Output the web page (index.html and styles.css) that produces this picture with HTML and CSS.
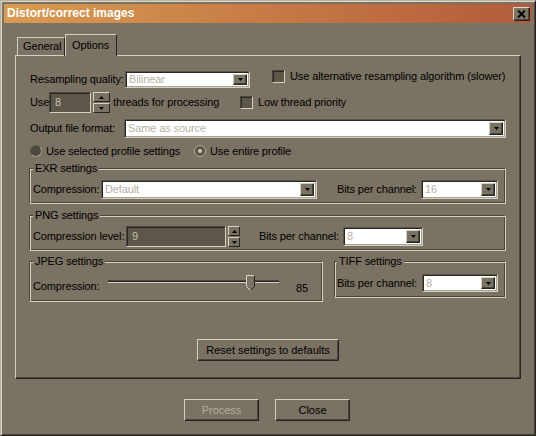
FILE: index.html
```html
<!DOCTYPE html>
<html>
<head>
<meta charset="utf-8">
<title>Distort/correct images</title>
<link rel="stylesheet" href="styles.css">
</head>
<body>
<div class="window">
  <div class="titlebar">
    <span class="title">Distort/correct images</span>
    <span class="close"><svg width="9" height="8" viewBox="0 0 9 8"><path d="M1 0.5 L8 7.5 M8 0.5 L1 7.5" stroke="#000" stroke-width="1.9" fill="none"/></svg></span>
  </div>
  <div class="tabs">
    <div class="tab general">General</div>
    <div class="tab active">Options</div>
  </div>
  <div class="pane">
    <div class="row r1">
      <span class="lbl w-rq">Resampling quality:</span>
      <div class="combo c-rq"><span class="val">Bilinear</span><span class="drop"><svg width="5" height="3" viewBox="0 0 5 3"><polygon points="0,0 5,0 2.5,3" fill="#000"/></svg></span></div>
      <span class="check c-alt"><span class="box"></span><span>Use alternative resampling algorithm (slower)</span></span>
    </div>
    <div class="row r2">
      <span class="lbl w-use">Use</span>
      <div class="spin s-threads">
        <span class="field">8</span>
        <span class="arrows">
          <span class="arr"><svg width="5" height="3" viewBox="0 0 5 3"><polygon points="0,3 5,3 2.5,0" fill="#000"/></svg></span>
          <span class="arr"><svg width="5" height="3" viewBox="0 0 5 3"><polygon points="0,0 5,0 2.5,3" fill="#000"/></svg></span>
        </span>
      </div>
      <span class="lbl w-thr">threads for processing</span>
      <span class="check"><span class="box"></span><span>Low thread priority</span></span>
    </div>
    <div class="row r3">
      <span class="lbl w-off">Output file format:</span>
      <div class="combo c-off"><span class="val">Same as source</span><span class="drop"><svg width="5" height="3" viewBox="0 0 5 3"><polygon points="0,0 5,0 2.5,3" fill="#000"/></svg></span></div>
    </div>
    <div class="row r4">
      <span class="radio r-sel"><span class="dot"></span>Use selected profile settings</span>
      <span class="radio checked"><span class="dot"></span>Use entire profile</span>
    </div>
    <fieldset class="group g-exr">
      <legend>EXR settings</legend>
      <div class="row grow-exr">
        <span class="lbl w-comp">Compression:</span>
        <div class="combo c-exr"><span class="val">Default</span><span class="drop"><svg width="5" height="3" viewBox="0 0 5 3"><polygon points="0,0 5,0 2.5,3" fill="#000"/></svg></span></div>
        <span class="lbl w-bits b-exr">Bits per channel:</span>
        <div class="combo c-bits"><span class="val">16</span><span class="drop"><svg width="5" height="3" viewBox="0 0 5 3"><polygon points="0,0 5,0 2.5,3" fill="#000"/></svg></span></div>
      </div>
    </fieldset>
    <fieldset class="group g-png">
      <legend>PNG settings</legend>
      <div class="row grow-png">
        <span class="lbl w-cl">Compression level:</span>
        <div class="spin s-png">
          <span class="field">9</span>
          <span class="arrows">
            <span class="arr"><svg width="5" height="3" viewBox="0 0 5 3"><polygon points="0,3 5,3 2.5,0" fill="#000"/></svg></span>
            <span class="arr"><svg width="5" height="3" viewBox="0 0 5 3"><polygon points="0,0 5,0 2.5,3" fill="#000"/></svg></span>
          </span>
        </div>
        <span class="lbl w-bits b-png">Bits per channel:</span>
        <div class="combo c-bits-png"><span class="val">8</span><span class="drop"><svg width="5" height="3" viewBox="0 0 5 3"><polygon points="0,0 5,0 2.5,3" fill="#000"/></svg></span></div>
      </div>
    </fieldset>
    <div class="pair">
      <fieldset class="group g-jpeg">
        <legend>JPEG settings</legend>
        <div class="row grow-jpeg">
          <span class="lbl w-jc">Compression:</span>
          <div class="slider">
            <span class="track"></span>
            <span class="thumb" style="left: 138px"><svg width="9" height="16" viewBox="0 0 9 16"><polygon points="0.5,0.5 8.5,0.5 8.5,11.5 4.5,15.5 0.5,11.5" fill="#7a7262"/><polyline points="0.5,11.5 0.5,0.5 8.5,0.5" fill="none" stroke="#dcd6c8"/><polyline points="8.5,0.5 8.5,11.5 4.5,15.5" fill="none" stroke="#26241f"/><polyline points="0.5,11.5 4.5,15.5" fill="none" stroke="#dcd6c8"/></svg></span>
          </div>
          <span class="num">85</span>
        </div>
      </fieldset>
      <fieldset class="group g-tiff">
        <legend>TIFF settings</legend>
        <div class="row grow-tiff">
          <span class="lbl w-bits">Bits per channel:</span>
          <div class="combo c-bits"><span class="val">8</span><span class="drop"><svg width="5" height="3" viewBox="0 0 5 3"><polygon points="0,0 5,0 2.5,3" fill="#000"/></svg></span></div>
        </div>
      </fieldset>
    </div>
    <div class="reset-row">
      <button class="btn reset">Reset settings to defaults</button>
    </div>
  </div>
  <div class="actions">
    <button class="btn disabled">Process</button>
    <button class="btn">Close</button>
  </div>
</div>
</body>
</html>
```

FILE: styles.css
```css
* { box-sizing: border-box; }
html, body { margin: 0; padding: 0; }
body {
  background: #7a7262;
  font-family: "Liberation Sans", Arial, sans-serif;
  font-size: 11px;
  line-height: 13px;
  letter-spacing: -0.12px;
  color: #000;
}
.window {
  width: 536px;
  height: 436px;
  border: 1px solid;
  border-color: #b8b2a3 #262420 #262420 #b8b2a3;
  box-shadow: inset 1px 1px #ddd7c8, inset -1px -1px #4a463d;
  padding: 3px;
  display: flex;
  flex-direction: column;
  background: #7a7262;
}
.titlebar {
  height: 19px;
  flex: none;
  display: flex;
  align-items: center;
  justify-content: space-between;
  padding: 0 2px 0 3px;
  background: linear-gradient(to right, #da9a50, #b25b3b);
}
.title {
  color: #fff;
  font-weight: bold;
  font-size: 12px;
  letter-spacing: 0;
}
.close {
  width: 17px;
  height: 14px;
  background: #7d7565;
  border: 1px solid;
  border-color: #dcd6c8 #26241f #26241f #dcd6c8;
  box-shadow: inset -1px -1px #4a463d;
  display: flex;
  align-items: center;
  justify-content: center;
}
.close svg { display: block; }

/* tabs */
.tabs {
  flex: none;
  display: flex;
  align-items: flex-end;
  height: 22px;
  margin: 11px 0 -1px 13px;
  position: relative;
  z-index: 1;
}
.tab {
  border: 1px solid;
  border-bottom: none;
  border-color: #d6d0c1 #26241f transparent #d6d0c1;
  display: flex;
  align-items: center;
}
.tab.general {
  width: 48px;
  height: 19px;
  padding: 0 0 1px 5px;
}
.tab.active {
  width: 52px;
  height: 22px;
  padding: 0 0 1px 6px;
  background: #7a7262;
}

/* pane */
.pane {
  flex: none;
  margin: 0 11px;
  height: 324px;
  border: 1px solid;
  border-color: #d6d0c1 #26241f #26241f #d6d0c1;
  box-shadow: inset -1px -1px #4a463d;
  padding: 14px 14px 0 14px;
  display: flex;
  flex-direction: column;
}
.row {
  display: flex;
  align-items: center;
  flex: none;
  white-space: nowrap;
}
.lbl { flex: none; white-space: nowrap; }
.r1 { height: 18px; }
.r2 { height: 21px; margin-top: 4px; }
.r3 { height: 19px; margin-top: 6px; }
.r4 { height: 14px; margin-top: 6px; }

.w-rq { width: 95px; }
.w-use { width: 19px; }
.w-thr { margin-left: 3px; width: 127px; }
.w-off { width: 94px; }
.w-comp { width: 68px; }
.w-bits { width: 84px; }
.w-cl { width: 93px; }
.w-jc { width: 75px; }

/* combo */
.combo {
  display: flex;
  align-items: stretch;
  background: #fff;
  border: 1px solid;
  border-color: #5a554a #d6d0c1 #d6d0c1 #5a554a;
  box-shadow: inset 1px 1px #2a2722, inset -1px -1px #a8a293;
  padding: 2px;
  flex: none;
}
.combo .val {
  flex: 1;
  color: #b9b0a3;
  padding-left: 1px;
  display: flex;
  align-items: center;
  overflow: hidden;
}
.combo .drop {
  width: 14px;
  flex: none;
  background: #7a7262;
  border: 1px solid;
  border-color: #d6d0c1 #26241f #26241f #d6d0c1;
  box-shadow: inset -1px -1px #4a463d;
  display: flex;
  align-items: center;
  justify-content: center;
}
.combo .drop svg, .arr svg { display: block; }
.c-rq { width: 125px; height: 17px; }
.c-off { flex: 1; height: 19px; }
.c-exr { width: 216px; height: 19px; }
.c-bits { width: 77px; height: 19px; }
.c-bits-png { width: 80px; height: 19px; }
.b-exr { margin-left: 20px; }
.b-png { margin-left: 19px; }

/* checkbox */
.check {
  display: flex;
  align-items: center;
  flex: none;
}
.check .box {
  width: 13px;
  height: 13px;
  background: #5d5749;
  border: 1px solid;
  border-color: #4a463d #d6d0c1 #d6d0c1 #4a463d;
  box-shadow: inset 1px 1px #2a2722;
  margin-right: 5px;
}
.c-alt { margin-left: 22px; }
.r1 .c-alt { align-self: flex-start; }

/* spin */
.spin { display: flex; flex: none; height: 21px; }
.spin .field {
  background: #5d5749;
  color: #c8c0af;
  border: 1px solid;
  border-color: #4a463d #d6d0c1 #d6d0c1 #4a463d;
  box-shadow: inset 1px 1px #2a2722;
  display: flex;
  align-items: center;
  padding-left: 5px;
}
.s-threads .field { width: 42px; }
.s-png .field { width: 100px; }
.arrows {
  display: flex;
  flex-direction: column;
  justify-content: space-between;
  margin-left: 2px;
}
.arr {
  height: 10px;
  border: 1px solid;
  border-color: #d6d0c1 #26241f #26241f #d6d0c1;
  background: #7a7262;
  display: flex;
  align-items: center;
  justify-content: center;
}
.s-threads .arr { width: 17px; }
.s-png .arr { width: 12px; }

/* radio */
.radio {
  display: flex;
  align-items: center;
  flex: none;
}
.radio .dot {
  width: 12px;
  height: 12px;
  border-radius: 50%;
  background: #4d4940;
  border: 1px solid;
  border-color: #5f5a4f #a29d90 #a29d90 #5f5a4f;
  margin-right: 4px;
  display: flex;
  align-items: center;
  justify-content: center;
}
.radio.checked .dot {
  background: #5d5749;
  border-color: #b0aa9d;
}
.radio.checked .dot::after {
  content: "";
  width: 4px;
  height: 4px;
  border-radius: 50%;
  background: #cfc9bc;
}
.r-sel { width: 164px; }

/* groups */
.group {
  margin: 0 0 0 -1px;
  border: 1px solid;
  border-color: #4a463d #d6d0c1 #d6d0c1 #4a463d;
  box-shadow: inset 1px 1px #d6d0c1, inset -1px -1px #4a463d;
  min-width: 0;
}
.group legend {
  padding: 0 2px;
  line-height: 13px;
  background: #7a7262;
}
.g-exr {
  margin-top: 4px;
  padding: 5px 5px 4px 3px;
}
.g-png {
  margin-top: 5px;
  padding: 4px 5px 3px 3px;
}
.grow-exr { height: 19px; }
.grow-png { height: 21px; }
.pair {
  display: flex;
  gap: 11px;
  margin-top: 4px;
  margin-left: -1px;
  align-items: flex-start;
}
.pair .group { margin: 0; }
.g-jpeg {
  width: 294px;
  padding: 8px 5px 5px 3px;
}
.g-tiff {
  width: 172px;
  padding: 6px 5px 5px 2px;
}
.grow-jpeg { height: 20px; }
.grow-tiff { height: 18px; }
.grow-tiff .w-bits { width: 85px; }
.grow-tiff .combo { width: 76px; height: 18px; }
.slider {
  position: relative;
  width: 171px;
  height: 20px;
  flex: none;
}
.track {
  display: block;
  margin-top: 4px;
  height: 3px;
  border-top: 1px solid #4a463d;
  border-bottom: 1px solid #d6d0c1;
  background: #2a2722;
}
.thumb {
  position: absolute;
  top: -1px;
}
.thumb svg { display: block; }
.num { margin-left: 17px; padding-top: 4px; }

/* buttons */
.btn {
  font: inherit;
  line-height: 13px;
  color: #000;
  background: #7a7262;
  border: 1px solid;
  border-color: #d6d0c1 #26241f #26241f #d6d0c1;
  box-shadow: inset -1px -1px #4a463d;
  padding: 0;
  height: 22px;
}
.btn.disabled { color: #b2ab9c; }
.reset-row {
  display: flex;
  justify-content: center;
  margin-top: 37px;
}
.reset { width: 142px; }
.actions {
  display: flex;
  justify-content: center;
  gap: 16px;
  margin-top: 20px;
  padding-right: 2px;
}
.actions .btn { width: 75px; }
```
